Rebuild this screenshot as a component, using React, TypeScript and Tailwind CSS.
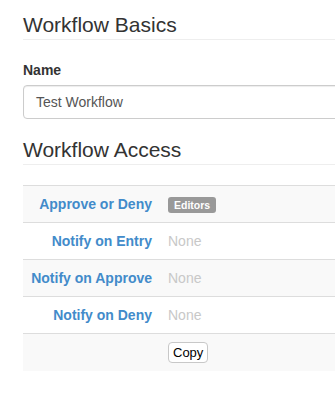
const rows = [
  { label: 'Approve or Deny', value: 'badge' },
  { label: 'Notify on Entry', value: 'None' },
  { label: 'Notify on Approve', value: 'None' },
  { label: 'Notify on Deny', value: 'None' },
];

export default function App() {
  return (
    <div
      className="w-[335px] h-[407px] overflow-hidden bg-white text-[14px] text-[#333]"
      style={{ fontFamily: '"Liberation Sans", Arial, sans-serif' }}
    >
      <div className="w-[380px] pl-[23px]">
        <h3 className="mt-[13px] pb-[3px] border-b border-[#eee] text-[21px] leading-[23px] font-normal">
          Workflow Basics
        </h3>

        <div className="mt-[20px]">
          <label className="block font-bold leading-[20px] mb-[5px]">Name</label>
          <div className="h-[34px] flex items-center px-[12px] border border-[#ccc] rounded-[4px] text-[#555] shadow-[inset_0_1px_1px_rgba(0,0,0,0.075)]">
            Test Workflow
          </div>
        </div>

        <h3 className="mt-[19px] pb-[3px] border-b border-[#eee] text-[21px] leading-[23px] font-normal">
          Workflow Access
        </h3>

        <table className="mt-[20px] w-full border-collapse">
          <tbody>
            {rows.map((row, i) => (
              <tr key={row.label} className={i % 2 === 0 ? 'bg-[#f9f9f9]' : 'bg-white'}>
                <th className="w-[137px] border-t border-[#ddd] px-[8px] py-[8px] text-right font-bold leading-[20px] text-[#428bca] whitespace-nowrap">
                  {row.label}
                </th>
                <td className="border-t border-[#ddd] px-[8px] py-[8px] leading-[20px]">
                  {row.value === 'badge' ? (
                    <span className="inline-block align-middle bg-[#999] text-white font-bold text-[10.5px] leading-[12px] px-[6px] pt-[2px] pb-[2px] rounded-[3px]">
                      Editors
                    </span>
                  ) : (
                    <span className="text-[#c8c8c8]">{row.value}</span>
                  )}
                </td>
              </tr>
            ))}
            <tr className="bg-[#f9f9f9]">
              <th className="border-t border-[#ddd] px-[8px] py-[8px]"></th>
              <td className="border-t border-[#ddd] px-[8px] py-[8px] leading-[20px]">
                <button className="block h-[21px] px-[4px] border border-[#c8c8c8] rounded-[4px] bg-white text-[13px] leading-[15px] text-black">
                  Copy
                </button>
              </td>
            </tr>
          </tbody>
        </table>
      </div>
    </div>
  );
}
